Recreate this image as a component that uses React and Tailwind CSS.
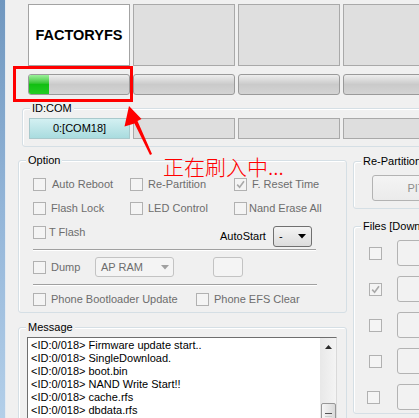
import React from "react";

const Check = ({ checked, className = "" }) => (
  <span className={`w-[13px] h-[13px] shrink-0 border border-[#b1b1b1] bg-[#f4f4f4] flex items-center justify-center ${className}`}>
    {checked && (
      <svg width="9" height="9" viewBox="0 0 9 9">
        <path d="M1.2 4.6 L3.6 7.2 L8 1.2" stroke="#a9a9a9" strokeWidth="1.6" fill="none" />
      </svg>
    )}
  </span>
);

const Opt = ({ label, checked, gap = "ml-[5px]", className = "" }) => (
  <div className={`flex items-center ${className}`}>
    <Check checked={checked} />
    <span className={`${gap} text-[#6d6d6d] whitespace-nowrap`}>{label}</span>
  </div>
);

const Group = ({ title, className = "", children }) => (
  <div className={`relative border border-[#d5dfe5] rounded-[3px] shadow-[inset_1px_1px_0_#ffffff] ${className}`}>
    <span className="absolute -top-[7px] left-[7px] px-[2px] bg-[#f0f0f0] leading-[13px] whitespace-nowrap">{title}</span>
    {children}
  </div>
);

const messages = [
  "Firmware update start..",
  "SingleDownload.",
  "boot.bin",
  "NAND Write Start!!",
  "cache.rfs",
  "dbdata.rfs",
  "factoryfs.rfs",
];

export default function App() {
  return (
    <div className="relative w-[419px] h-[418px] overflow-hidden bg-[#f0f0f0] flex font-['Liberation_Sans',Arial,sans-serif] text-[11px] text-black">
      {/* window frame */}
      <div className="w-[5px] h-full shrink-0 bg-gradient-to-b from-[#7097bf] via-[#93b5d8] to-[#b3cfe9]" />
      <div className="w-px h-full shrink-0 bg-[#e4ebf2]" />

      <div className="flex-1 min-w-0 flex flex-col">
        {/* top: file slots, progress, ID:COM */}
        <div className="h-[150px] shrink-0 pl-[16px] flex flex-col">
          <div className="ml-[6px] mt-[4px] flex gap-[3px]">
            <div className="w-[102px] h-[62px] shrink-0 bg-white border border-[#a3a3a3] flex items-center justify-center pt-[2px]">
              <span className="text-[14.5px] font-bold">FACTORYFS</span>
            </div>
            <div className="w-[102px] h-[62px] shrink-0 bg-[#dfdfdf] border border-[#a9a9a9]" />
            <div className="w-[102px] h-[62px] shrink-0 bg-[#dfdfdf] border border-[#a9a9a9]" />
            <div className="w-[102px] h-[62px] shrink-0 bg-[#dfdfdf] border border-[#a9a9a9]" />
          </div>

          <div className="ml-[6px] mt-[8px] flex gap-[3px]">
            <div className="w-[102px] h-[21px] shrink-0 border border-[#9a9a9a] rounded-[3px] bg-gradient-to-b from-[#eeeeee] via-[#cacaca] to-[#d4d4d4] overflow-hidden">
              <div className="w-[20px] h-full bg-gradient-to-b from-[#9af09a] via-[#12c012] to-[#22cc22]" />
            </div>
            <div className="w-[102px] h-[21px] shrink-0 border border-[#9a9a9a] rounded-[3px] bg-gradient-to-b from-[#eeeeee] via-[#cacaca] to-[#d4d4d4]" />
            <div className="w-[102px] h-[21px] shrink-0 border border-[#9a9a9a] rounded-[3px] bg-gradient-to-b from-[#eeeeee] via-[#cacaca] to-[#d4d4d4]" />
            <div className="w-[102px] h-[21px] shrink-0 border border-[#9a9a9a] rounded-[3px] bg-gradient-to-b from-[#eeeeee] via-[#cacaca] to-[#d4d4d4]" />
          </div>

          <Group title="ID:COM" className="mt-[13px] h-[39px] w-[520px] shrink-0">
            <div className="flex gap-[3px] pl-[6px] pt-[9px]">
              <div className="w-[101px] h-[21px] shrink-0 border border-[#a9c9cc] bg-gradient-to-b from-[#d3f0f2] to-[#a9dcdf] flex items-center justify-center">
                0:[COM18]
              </div>
              <div className="w-[102px] h-[21px] shrink-0 bg-[#dedede] border border-[#a9a9a9]" />
              <div className="w-[102px] h-[21px] shrink-0 bg-[#dedede] border border-[#a9a9a9]" />
              <div className="w-[102px] h-[21px] shrink-0 bg-[#dedede] border border-[#a9a9a9]" />
            </div>
          </Group>
        </div>

        {/* lower area */}
        <div className="flex pl-[12px]">
          <div className="w-[329px] shrink-0 flex flex-col">
            <Group title="Option" className="mt-[10px] h-[153px] shrink-0">
              <div className="pl-[14px] pt-[11px] flex flex-col">
                <div className="h-[24px] flex items-center">
                  <Opt label="Auto Reboot" gap="ml-[6px]" className="w-[97px]" />
                  <Opt label="Re-Partition" className="w-[104px]" />
                  <Opt label="F. Reset Time" checked />
                </div>
                <div className="h-[24px] flex items-center">
                  <Opt label="Flash Lock" className="w-[97px]" />
                  <Opt label="LED Control" className="w-[104px]" />
                  <Opt label="Nand Erase All" gap="ml-[2px]" />
                </div>
                <div className="h-[27px] flex">
                  <div className="w-[187px] h-[24px] flex items-center">
                    <Opt label="T Flash" gap="ml-[3px]" />
                  </div>
                  <div className="self-end flex items-center">
                    <span className="w-[53px]">AutoStart</span>
                    <div className="w-[39px] h-[21px] border border-[#707070] rounded-[3px] bg-gradient-to-b from-[#f4f4f4] to-[#dcdcdc] flex items-center justify-between pl-[5px] pr-[5px]">
                      <span>-</span>
                      <svg width="8" height="5" viewBox="0 0 8 5"><path d="M0 0 H8 L4 4.5 Z" fill="#000" /></svg>
                    </div>
                  </div>
                </div>
                <div className="mt-[2px] w-[283px] h-[2px] border-t border-[#a0a0a0] border-b border-b-white" />
                <div className="mt-[6px] h-[20px] flex items-center">
                  <Opt label="Dump" className="w-[62px]" />
                  <div className="w-[79px] h-[20px] border border-[#c3c3c3] rounded-[3px] bg-[#f4f4f4] flex items-center justify-between pl-[5px] pr-[4px]">
                    <span className="text-[#6d6d6d]">AP RAM</span>
                    <svg width="8" height="5" viewBox="0 0 8 5"><path d="M0 0 H8 L4 4.5 Z" fill="#a0a0a0" /></svg>
                  </div>
                  <div className="ml-[39px] w-[30px] h-[20px] border border-[#c3c3c3] rounded-[3px] bg-[#f4f4f4]" />
                </div>
                <div className="mt-[7px] w-[284px] h-[2px] border-t border-[#a0a0a0] border-b border-b-white" />
                <div className="h-[27px] flex items-center">
                  <Opt label="Phone Bootloader Update" className="w-[163px]" />
                  <Opt label="Phone EFS Clear" />
                </div>
              </div>
            </Group>

            <Group title="Message" className="mt-[14px] h-[120px] shrink-0">
              <div className="ml-[8px] mt-[9px] w-[310px] h-[100px] bg-white border border-[#dadada] border-t-[#6e6e6e] border-l-[#6e6e6e] flex">
                <div className="flex-1 pl-[3px] pt-[1px] leading-[13px]">
                  {messages.map((m) => (
                    <div key={m} className="whitespace-nowrap">&lt;ID:0/018&gt; {m}</div>
                  ))}
                </div>
                <div className="w-[16px] h-full bg-gradient-to-r from-[#e8e8e8] to-[#f4f4f4] flex flex-col items-center">
                  <div className="h-[17px] flex items-center justify-center">
                    <svg width="7" height="4" viewBox="0 0 7 4"><path d="M0 4 L3.5 0 L7 4 Z" fill="#2a2a2a" /></svg>
                  </div>
                  <div className="mt-[48px] w-[15px] h-[30px] border border-[#979797] rounded-[2px] bg-gradient-to-r from-[#f6f6f6] to-[#dadada] flex flex-col items-center pt-[9px] gap-[2px]">
                    <div className="w-[7px] h-px bg-[#555555]" />
                    <div className="w-[7px] h-px bg-[#cfcfcf]" />
                  </div>
                </div>
              </div>
            </Group>
          </div>

          <div className="ml-[6px] w-[140px] shrink-0 flex flex-col">
            <Group title="Re-Partition" className="mt-[11px] h-[48px] shrink-0">
              <div className="pl-[18px] pt-[13px]">
                <div className="w-[88px] h-[26px] border border-[#b3b3b3] rounded-[3px] bg-gradient-to-b from-[#f4f4f4] to-[#ebebeb] flex items-center justify-center text-[#8d8d8d]">
                  PIT
                </div>
              </div>
            </Group>

            <Group title="Files [Download]" className="mt-[17px] h-[188px] shrink-0">
              <div className="pl-[15px] pt-[13px] flex flex-col gap-[10px]">
                {[false, true, false, false, false].map((c, i) => (
                  <div key={i} className="h-[26px] flex items-center">
                    <Check checked={c} className={i === 4 ? "-ml-[2px] mr-[17px]" : "mr-[15px]"} />
                    <div className="w-[100px] h-[26px] border border-[#b3b3b3] rounded-[3px] bg-[#f2f2f2]" />
                  </div>
                ))}
              </div>
            </Group>
          </div>
        </div>
      </div>

      {/* red annotation overlay */}
      <div className="absolute left-[13px] top-[66px] w-[120px] h-[36px] border-[3px] border-[#ff0000]" />
      <svg className="absolute left-0 top-0" width="419" height="418" viewBox="0 0 419 418">
        <polygon points="129,106 141.5,119 137.5,121 152,154 150,155 134.5,123.5 124.5,126.5" fill="#ff0000" />
      </svg>
      <div className="absolute left-[163px] top-[157px] text-[21px] leading-[19px] text-[#ff0000] font-['Noto_Sans_CJK_SC',sans-serif] font-light whitespace-nowrap">
        正在刷入中...
      </div>
    </div>
  );
}
